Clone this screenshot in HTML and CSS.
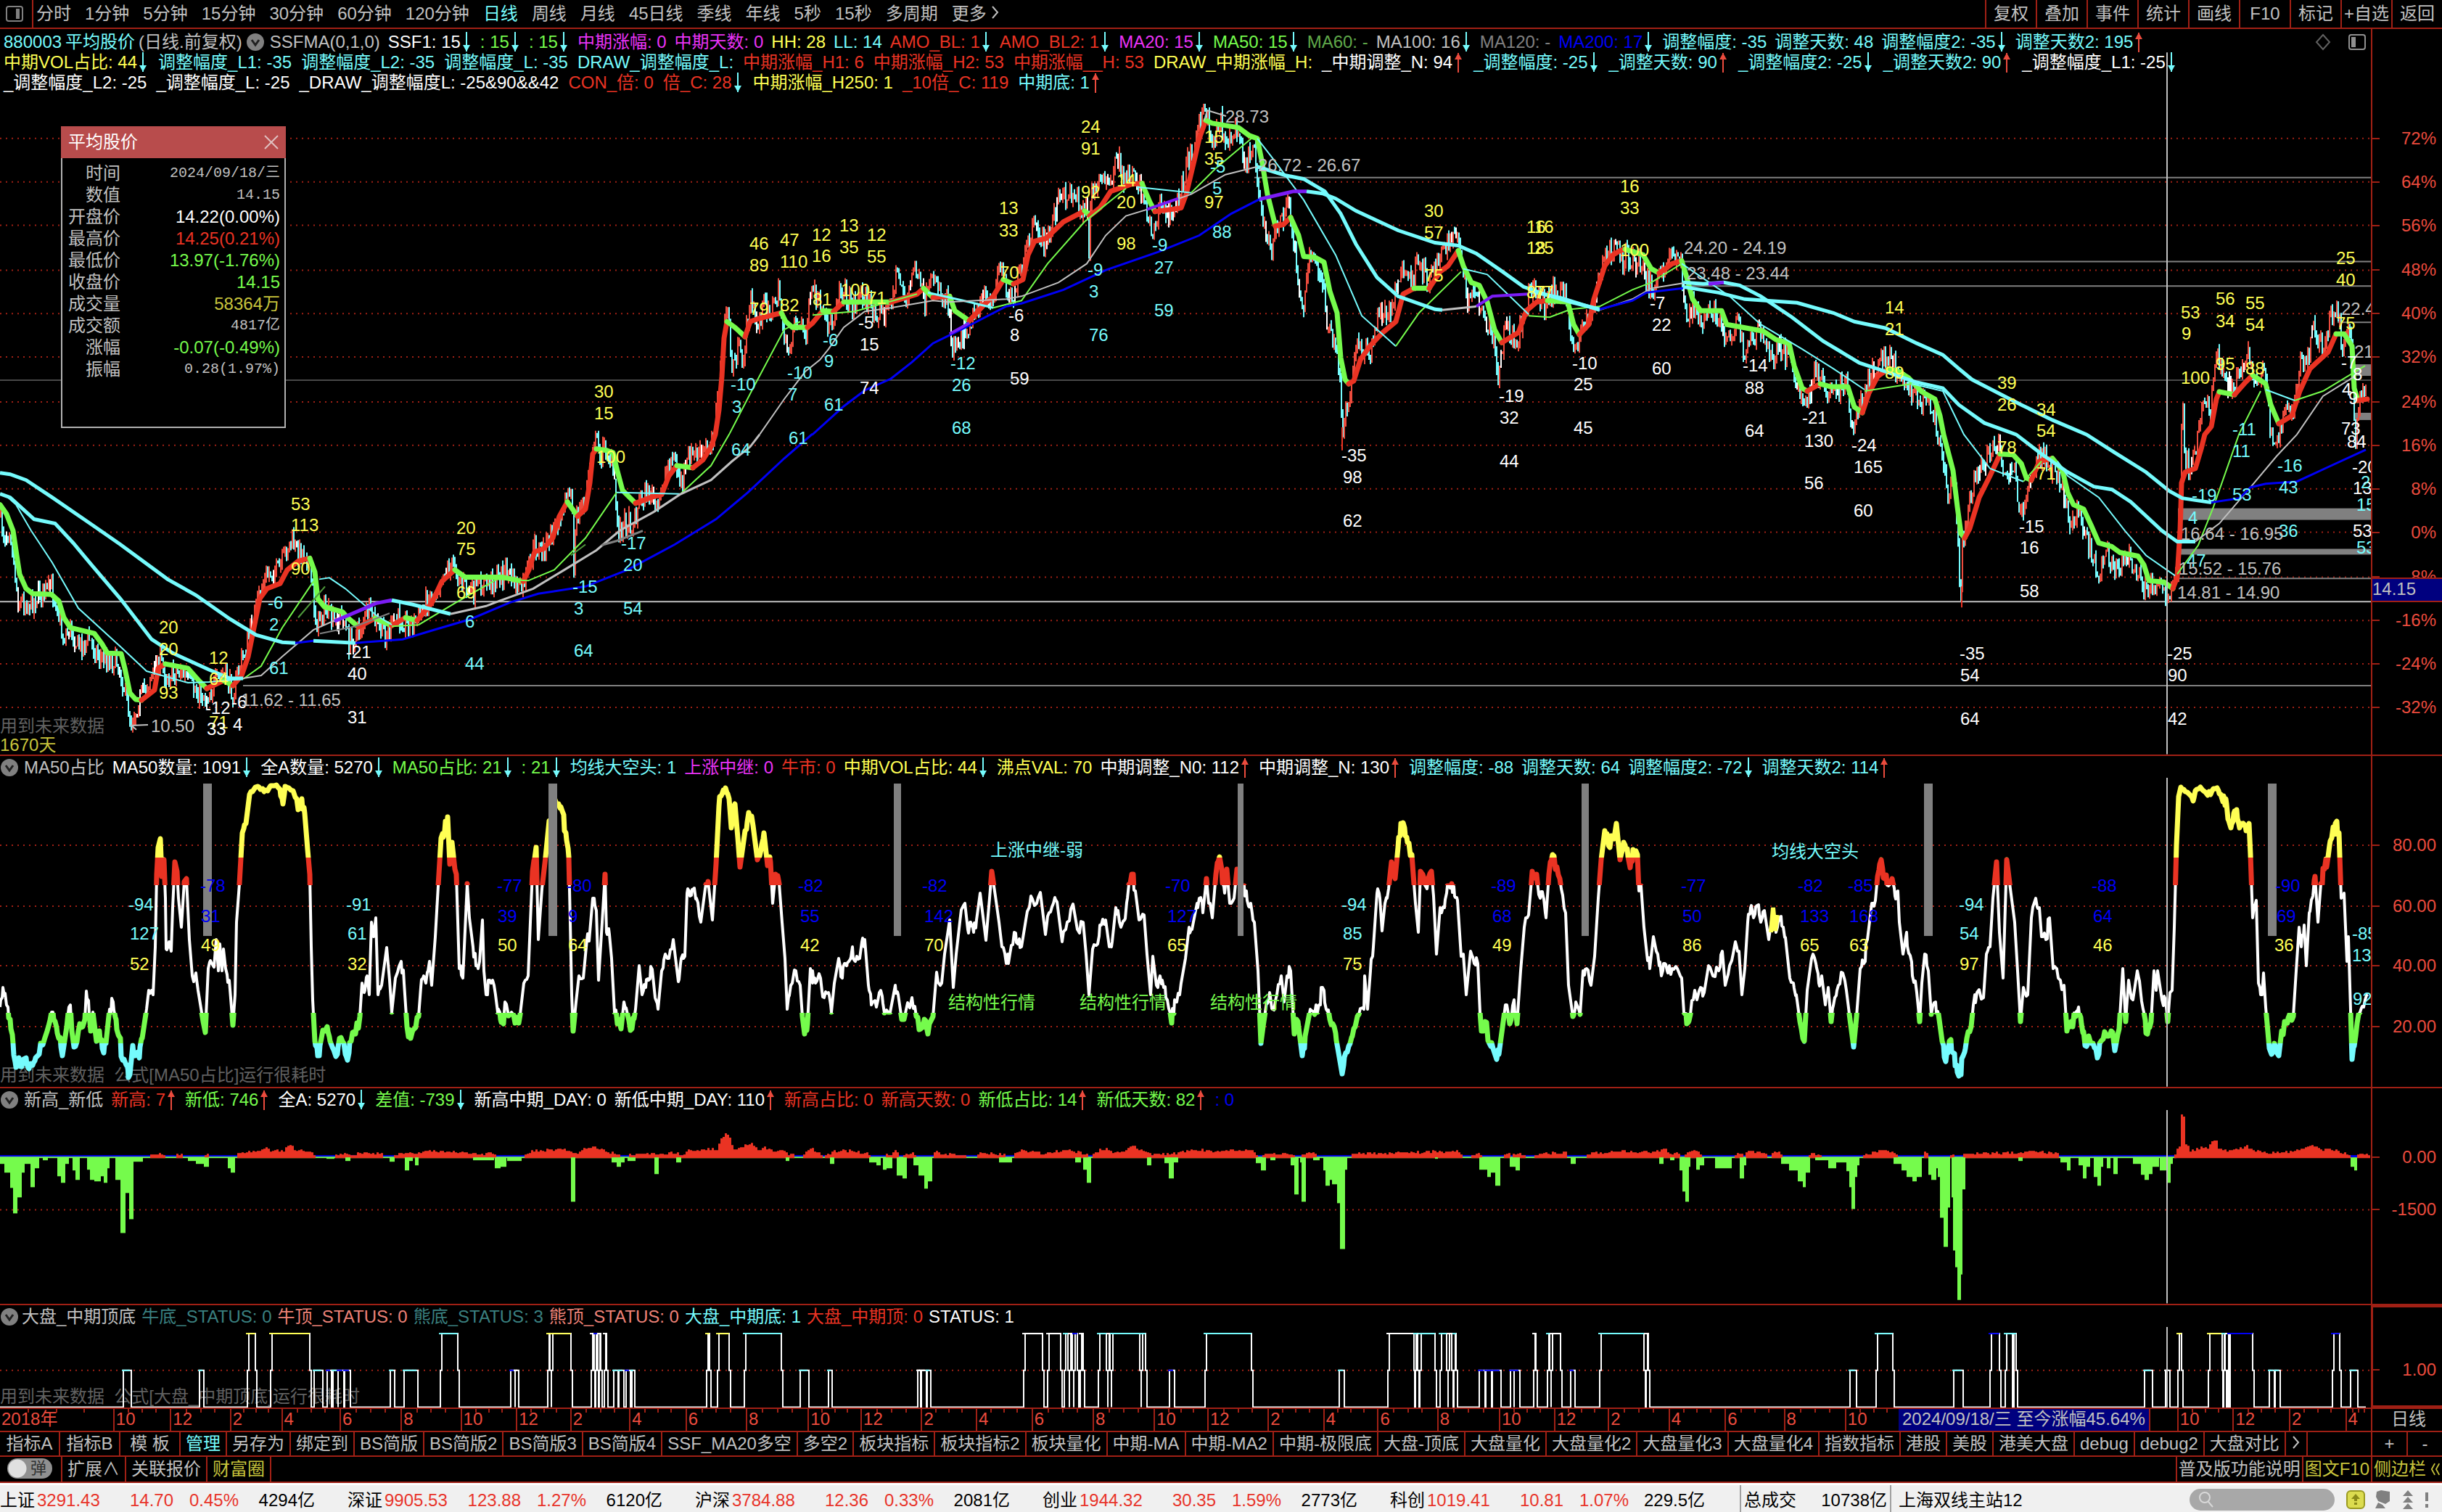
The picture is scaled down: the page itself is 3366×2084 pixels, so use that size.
FILE: index.html
```html
<!DOCTYPE html>
<html lang="zh-CN">
<head>
<meta charset="utf-8">
<title>平均股价 880003 日线</title>
<link rel="stylesheet" href="styles.css">
</head>
<body>
<div class="app">
  <header class="toolbar">
    <button class="layout-btn" aria-label="布局"><svg width="26" height="24" viewBox="0 0 26 24"><rect x="2" y="2" width="22" height="20" rx="3" fill="none" stroke="#808080" stroke-width="2"/><rect x="15" y="5" width="5" height="14" fill="#808080"/></svg></button>
    <nav class="periods">
      <button>分时</button><button>1分钟</button><button>5分钟</button><button>15分钟</button><button>30分钟</button><button>60分钟</button><button>120分钟</button><button class="on">日线</button><button>周线</button><button>月线</button><button>45日线</button><button>季线</button><button>年线</button><button>5秒</button><button>15秒</button><button>多周期</button><button>更多 <svg width="12" height="20" viewBox="0 0 12 20"><path d="M2 2l7 8-7 8" fill="none" stroke="#c0c0c0" stroke-width="2"/></svg></button>
    </nav>
    <div class="tools">
      <button>复权</button><button>叠加</button><button>事件</button><button>统计</button><button>画线</button><button>F10</button><button>标记</button><button>+自选</button><button>返回</button>
    </div>
  </header>

  <section class="pane pane-price">
    <div class="legend" id="legend-price"></div>
    <div class="chart" id="chart-price"></div>
    <div class="scale"></div>
    <div class="marks" id="marks-price"></div>
    <table class="quote">
      <caption><span>平均股价</span><button aria-label="关闭"><svg width="20" height="20" viewBox="0 0 20 20"><path d="M1 1l18 18M19 1L1 19" stroke="#e0c0c0" stroke-width="2"/></svg></button></caption>
      <tbody>
        <tr class="mono"><th>时间</th><td>2024/09/18/三</td></tr>
        <tr class="mono"><th>数值</th><td>14.15</td></tr>
        <tr class="w"><th>开盘价</th><td>14.22(0.00%)</td></tr>
        <tr class="r"><th>最高价</th><td>14.25(0.21%)</td></tr>
        <tr class="g"><th>最低价</th><td>13.97(-1.76%)</td></tr>
        <tr class="g"><th>收盘价</th><td>14.15</td></tr>
        <tr class="o"><th>成交量</th><td>58364万</td></tr>
        <tr class="mono"><th>成交额</th><td>4817亿</td></tr>
        <tr class="g"><th>涨幅</th><td>-0.07(-0.49%)</td></tr>
        <tr class="mono"><th>振幅</th><td>0.28(1.97%)</td></tr>
      </tbody>
    </table>
  </section>

  <section class="pane pane-breadth">
    <div class="legend" id="legend-breadth"></div>
    <div class="chart" id="chart-breadth"></div>
    <div class="scale"></div>
    <div class="marks" id="marks-breadth"></div>
  </section>

  <section class="pane pane-highlow">
    <div class="legend" id="legend-highlow"></div>
    <div class="chart" id="chart-highlow"></div>
    <div class="scale"></div>
    <div class="marks" id="marks-highlow"></div>
  </section>

  <section class="pane pane-status">
    <div class="legend" id="legend-status"></div>
    <div class="chart" id="chart-status"></div>
    <div class="scale boxed"></div>
    <div class="marks" id="marks-status"></div>
  </section>

  <div class="dates">
    <div class="months" id="months"></div>
    <div class="date-unit">日线</div>
  </div>

  <nav class="tabs">
    <button class="wide">指标A</button><button class="wide">指标B</button><button class="wide">模 板</button><button class="on">管理</button><button>另存为</button><button>绑定到</button><button>BS简版</button><button>BS简版2</button><button>BS简版3</button><button>BS简版4</button><button>SSF_MA20多空</button><button>多空2</button><button>板块指标</button><button>板块指标2</button><button>板块量化</button><button>中期-MA</button><button>中期-MA2</button><button>中期-极限底</button><button>大盘-顶底</button><button>大盘量化</button><button>大盘量化2</button><button>大盘量化3</button><button>大盘量化4</button><button>指数指标</button><button>港股</button><button>美股</button><button>港美大盘</button><button>debug</button><button>debug2</button><button>大盘对比</button><button aria-label="更多指标"><svg width="14" height="20" viewBox="0 0 14 20"><path d="M3 2l7 8-7 8" fill="none" stroke="#c0c0c0" stroke-width="2"/></svg></button>
    <div class="zoomers"><button>+</button><button>-</button></div>
  </nav>

  <div class="extras">
    <label class="switch"><input type="checkbox"><span>弹</span></label>
    <button>扩展∧</button><button>关联报价</button><button class="gold">财富圈</button>
    <span class="spacer"></span>
    <button class="tight">普及版功能说明</button><button class="gold tight">图文F10</button><button class="gold side">侧边栏 <svg width="16" height="22" viewBox="0 0 16 22"><path d="M7 2L2 11l5 9M14 2L9 11l5 9" fill="none" stroke="#c8c43c" stroke-width="2"/></svg></button>
  </div>

  <footer class="status">
    <div class="idx"><span>上证</span><b>3291.43</b><i>14.70</i><i>0.45%</i><em>4294亿</em></div>
    <div class="idx"><span>深证</span><b>9905.53</b><i>123.88</i><i>1.27%</i><em>6120亿</em></div>
    <div class="idx"><span>沪深</span><b>3784.88</b><i>12.36</i><i>0.33%</i><em>2081亿</em></div>
    <div class="idx"><span>创业</span><b>1944.32</b><i>30.35</i><i>1.59%</i><em>2773亿</em></div>
    <div class="idx"><span>科创</span><b>1019.41</b><i>10.81</i><i>1.07%</i><em>229.5亿</em></div>
    <div class="total"><span>总成交</span><em>10738亿</em></div>
    <div class="host">上海双线主站12</div>
    <label class="search"><svg width="22" height="24" viewBox="0 0 22 24"><circle cx="9" cy="9" r="7" fill="none" stroke="#d8d8d8" stroke-width="2"/><path d="M14 15l6 7" stroke="#d8d8d8" stroke-width="2"/></svg><input type="search" aria-label="搜索"></label>
    <svg class="tray" width="132" height="28" viewBox="0 0 132 28">
      <rect x="1" y="2" width="24" height="24" rx="5" fill="#dcdc50" stroke="#9a9a20" stroke-width="2"/><path d="M13 6l-6 7h4v3h4v-3h4zM11 18h4v3h-4z" fill="#8a8a18"/>
      <path d="M42 3l6-2 12 2v13l-6 4-10-4-3-6zM44 18l-4 8h14l-4-5" fill="#808080"/>
      <path d="M85 1l7 8H78zM85 10l7 8H78zM85 19l7 8H78z" fill="#808080"/>
      <path d="M109 4h4v12h-4zM109 20h4v5h-4z" fill="#808080"/>
    </svg>
  </footer>
</div>
<script src="chart.js"></script>
</body>
</html>
```
FILE: styles.css
```css
* { box-sizing: border-box; }
:root {
  --line: #a02015;
  --cyan: #75fbfd;
  --green: #75fb4c;
  --yellow: #ffff54;
  --red: #ea3323;
  --blue: #0000f5;
  --gray: #c0c0c0;
}
body {
  margin: 0;
  background: #000;
  color: var(--gray);
  font: 24px/28px "Liberation Sans", "Noto Sans CJK SC", sans-serif;
  white-space: nowrap;
}
button { background: none; border: 0; padding: 0; margin: 0; color: inherit; font: inherit; white-space: nowrap; }
.app { height: 100vh; display: flex; flex-direction: column; overflow: hidden; }

.toolbar { flex: 0 0 40px; display: flex; border-bottom: 2px solid var(--line); }
.layout-btn { width: 46px; border-right: 2px solid var(--line); display: flex; align-items: center; justify-content: center; padding-right: 4px; }
.periods { display: flex; gap: 19px; padding-left: 4px; }
.periods .on { color: var(--cyan); }
.tools { margin-left: auto; display: flex; }
.tools button { width: 70px; border-left: 2px solid var(--line); }

.pane {
  position: relative;
  flex: 1 1 0;
  min-height: 0;
  display: grid;
  grid-template-columns: minmax(0, 1fr) 98px;
  grid-template-rows: auto minmax(0, 1fr);
  border-bottom: 2px solid var(--line);
}
.pane-price { flex-grow: 1004; }
.pane-breadth { flex-grow: 458; }
.pane-highlow { flex-grow: 298; }
.pane-status { flex-grow: 142; }
.legend { grid-area: 1 / 1; padding: 2px 0 0 0; overflow: hidden; }
.pane-price .legend { padding: 4px 0 0 5px; }
.row { display: flex; gap: 11px; height: 28px; }
.row + .row { gap: 13px; }
.pane-status .row { gap: 8px; }
.row > span { display: flex; white-space: pre; }
.row svg { flex: none; }
.row .corner { margin-left: auto; margin-right: 6px; gap: 22px; align-items: center; }
.row .fold { margin-right: -4px; }
.row .tight { margin-right: -6px; }
.chart { grid-area: 2 / 1; position: relative; min-height: 0; clip-path: inset(-56px 0 0 0); }
.chart > svg { position: absolute; inset: 0; width: 100%; height: 100%; overflow: visible; z-index: 1; }
.chart > svg * { vector-effect: non-scaling-stroke; }
.tag { position: absolute; margin-top: -14px; z-index: 2; white-space: pre; }
.tag.d { z-index: 0; }
.scale { grid-area: 1 / 2 / 3 / 3; border-left: 2px solid var(--line); }
.scale.boxed { border: 3px solid var(--line); border-right: 0; }
.marks { grid-area: 2 / 2; position: relative; color: #eb4b3d; }
.marks span { position: absolute; right: 8px; margin-top: -14px; }
.marks span::before { content: ""; position: absolute; right: 78px; top: 13px; width: 10px; height: 2px; background: var(--line); }
.marks .now { left: 2px; right: 0; height: 34px; margin-top: -17px; line-height: 28px; background: #00007f; color: var(--gray); border-block: 2px solid var(--line); }
.marks .now::before { content: none; }

.w { color: #fff; } .c { color: var(--cyan); } .g { color: var(--green); } .y { color: var(--yellow); }
.r { color: var(--red); } .b { color: var(--blue); } .m { color: #ea33f7; } .k { color: var(--gray); }
.o { color: #c8c43c; } .d { color: #606060; } .l { color: #5fa84a; } .n { color: #808080; }
.t { color: #3a8080; } .p { color: #ee8277; }

.quote {
  position: absolute; left: 84px; top: 134px; z-index: 3; width: 310px; height: 416px;
  display: block; background: #000; border: 2px solid #b0b0b0; border-top: 0; border-spacing: 0;
}
.quote caption { display: flex; justify-content: space-between; align-items: center; height: 44px; margin: 0 -2px; padding: 0 10px; background: #b84c4c; color: #fff; }
.quote button { display: flex; }
.quote tbody { display: block; padding-top: 6px; }
.quote tr { display: flex; justify-content: space-between; height: 30px; line-height: 30px; padding-right: 6px; }
.quote th { width: 80px; padding: 0; text-align: right; font-weight: 400; color: var(--gray); }
.quote td { padding: 0; }
.quote .mono td { font-family: "Liberation Mono", "Noto Sans CJK SC", monospace; font-size: 20px; }

.dates { flex: 0 0 32px; display: flex; border-bottom: 2px solid var(--line); color: #eb4b3d; }
.months { position: relative; flex: 1; display: flex; min-width: 0; }
.months div { flex-basis: 0; min-width: 0; overflow: visible; padding-left: 2px; border-left: 2px solid var(--line); position: relative;
  background: linear-gradient(var(--line), var(--line)) 25% 0 / 2px 5px no-repeat, linear-gradient(var(--line), var(--line)) 50% 0 / 2px 5px no-repeat, linear-gradient(var(--line), var(--line)) 75% 0 / 2px 5px no-repeat; }
.months div:first-child { border-left: 0; }
.months .pick { position: absolute; top: 0; bottom: 0; background: #00007f; color: var(--gray); padding: 0 5px; border-right: 2px solid var(--line); }
.date-unit { width: 98px; padding-left: 26px; border-left: 2px solid var(--line); color: var(--gray); }

.tabs { flex: 0 0 34px; display: flex; border-bottom: 2px solid var(--line); }
.tabs > button { padding: 0 7px; border-right: 2px solid var(--line); }
.tabs .wide { width: 83px; }
.tabs .on { color: var(--cyan); }
.zoomers { margin-left: auto; width: 98px; display: flex; border-left: 2px solid var(--line); }
.zoomers button { flex: 1; }
.zoomers button + button { border-left: 2px solid var(--line); }

.extras { flex: 0 0 36px; display: flex; border-bottom: 2px solid var(--line); }
.extras > button { padding: 0 7px; border-right: 2px solid var(--line); }
.extras .tight { padding: 0 2px; border-right: 0; border-left: 2px solid var(--line); }
.extras .side { width: 98px; padding: 0 2px; border-left: 2px solid var(--line); border-right: 0; display: flex; align-items: center; gap: 6px; }
.extras .gold { color: #c8c43c; }
.spacer { flex: 1; }
.switch { width: 86px; padding: 2px 0 0 10px; border-right: 2px solid var(--line); position: relative; }
.switch input { appearance: none; display: block; margin: 0; width: 62px; height: 28px; border-radius: 14px; background: radial-gradient(circle at 14px 14px, #e0e0e0 12px, transparent 13px) #909090; }
.switch span { position: absolute; left: 42px; top: 2px; font-size: 22px; color: #303030; }

.status { flex: 0 0 40px; min-height: 0; overflow: hidden; display: flex; align-items: stretch; background: #f0f0f0; border-top: 3px solid #fff; color: #000; line-height: 42px; }
.idx { width: 479px; height: 42px; display: grid; grid-template-columns: 51px 91px 97px 90px 105px; }
.status b, .status i { font-weight: 400; font-style: normal; color: #e8342a; }
.status em { font-style: normal; text-align: right; }
.status i { text-align: right; }
.total { width: 209px; margin-left: 3px; padding: 0 4px; display: flex; justify-content: space-between; border: solid #a0a0a0; border-width: 0 2px; }
.host { padding-left: 10px; }
.search { margin: 5px 16px 2px auto; width: 200px; border-radius: 15px; background: #a8a8a8; display: flex; align-items: center; padding-left: 12px; }
.search input { width: 150px; border: 0; background: none; font: inherit; height: 26px; }
.tray { margin-top: 6px; }
```
FILE: chart.js
```js
// Every series is recorded in tiles: origin x, origin y, x step, y step.
const T = {
  A: [0, 0, .72066, .38265], B: [1120, 0, .72066, .38265], C: [2240, 0, .71811, .38265],
  D: [0, 600, .72066, .33333], E: [2240, 600, .71811, .33333], L: [1120, 500, .72066, .35714],
  F: [0, 1040, .72066, .33333], G: [1120, 1040, .72066, .33333], H: [2240, 1040, .71811, .33333],
  I: [0, 1500, .72066, .37245], J: [1120, 1500, .72066, .37245], K: [2240, 1500, .71811, .37245]
};
const X = (t, x) => Math.round(T[t][0] + x * T[t][2]);
const Y = (t, y) => Math.round(T[t][1] + y * T[t][3]);
// "D 0,290 12,330 A 5,6" -> [[x, y], ...] in chart units
function pts(s) {
  let t = 'A'; const out = [];
  for (const w of s.trim().split(/\s+/)) {
    if (T[w]) { t = w; continue; }
    const [x, y] = w.split(',').map(Number);
    out.push([X(t, x), Y(t, y)]);
  }
  return out;
}
const COLOR = { c: '#75fbfd', g: '#75fb4c', y: '#ffff54', r: '#ea3323', b: '#0000f5', v: '#7b1cf5', w: '#fff', k: '#c0c0c0', n: '#808080', m: '#ea33f7', l: '#4f9a3c', line: '#a02015' };
const line = (p, c, w, extra = '') => `<polyline points="${p.map(q => q.join()).join(' ')}" fill="none" stroke="${COLOR[c] || c}" stroke-width="${w}" ${extra}/>`;
const rect = (x0, y0, x1, y1, c) => `<rect x="${x0}" y="${y0}" width="${x1 - x0}" height="${y1 - y0}" fill="${COLOR[c] || c}"/>`;
const grid = ys => ys.map(y => line([[0, y], [3268, y]], 'line', 2, 'stroke-dasharray="2 6"')).join('');
let seed = 7;
const rnd = () => (seed = (seed * 16807) % 2147483647) / 2147483647;

function mount(id, top, bottom, svg, tags, marks) {
  const h = bottom - top, pct = y => ((y - top) / h * 100).toFixed(3);
  let html = `<svg viewBox="0 ${top} 3268 ${h}" preserveAspectRatio="none">${svg}</svg>`;
  for (const row of tags.trim().split('\n').filter(Boolean)) {
    const [t, cls, ...items] = row.trim().split('|');
    for (const it of items) {
      const [x, y, text] = it.split('@');
      html += `<span class="tag ${cls}" style="left:${(X(t, +x) / 32.68).toFixed(3)}%;top:${pct(Y(t, +y))}%">${text}</span>`;
    }
  }
  document.getElementById('chart-' + id).innerHTML = html;
  document.getElementById('marks-' + id).innerHTML = marks.map(([y, s, c]) => `<span class="${c || ''}" style="top:${pct(y)}%">${s}</span>`).join('');
}

/* ---------- legends ---------- */
const DOWN = '<svg width="16" height="28" viewBox="0 0 16 28"><path d="M8 0v27" stroke="#75fbfd" stroke-width="2"/><path d="M3 18h10l-5 9z" fill="#75fbfd"/></svg>';
const UP = '<svg width="16" height="28" viewBox="0 0 16 28"><path d="M8 1v27" stroke="#eb4b3d" stroke-width="2"/><path d="M3 10h10l-5-9z" fill="#eb4b3d"/></svg>';
const FOLD = '<svg width="26" height="28" viewBox="0 0 26 28"><circle cx="13" cy="14" r="12" fill="#808080"/><path d="M8 11l5 7 5-7" fill="none" stroke="#202020" stroke-width="3"/></svg>';
const CORNER = '<svg width="24" height="24" viewBox="0 0 24 24"><path d="M12 2l9 10-9 10-9-10z" fill="none" stroke="#606060" stroke-width="2"/></svg><svg width="26" height="24" viewBox="0 0 26 24"><rect x="2" y="2" width="22" height="20" rx="3" fill="none" stroke="#909090" stroke-width="2"/><rect x="5" y="5" width="6" height="14" fill="#909090"/></svg>';
function legend(id, rows) {
  document.getElementById('legend-' + id).innerHTML = rows.map(r => '<div class="row">' + r.split('|').map(it => {
    if (it === 'FOLD') return `<span class="fold">${FOLD}</span>`;
    if (it === 'CORNER') return `<span class="corner">${CORNER}</span>`;
    const k = it.indexOf(' ');
    return `<span class="${it.slice(0, k).split('.').join(' ')}">${it.slice(k + 1).replace('↓', DOWN).replace('↑', UP)}</span>`;
  }).join('') + '</div>').join('');
}
legend('price', [
  'c.tight 880003|c.tight 平均股价|k.tight (日线.前复权)|FOLD|k SSFMA(0,1,0)|w SSF1: 15↓|g : 15↓|g : 15↓|m 中期涨幅: 0|m 中期天数: 0|y HH: 28|c LL: 14|r AMO_BL: 1↓|r AMO_BL2: 1↓|m MA20: 15↓|g MA50: 15↓|l MA60: -|k MA100: 16↓|n MA120: -|b MA200: 17↓|c 调整幅度: -35|c 调整天数: 48|c 调整幅度2: -35↓|c 调整天数2: 195↑|CORNER',
  'y 中期VOL占比: 44↓|c 调整幅度_L1: -35|c 调整幅度_L2: -35|c 调整幅度_L: -35|c DRAW_调整幅度_L:|r 中期涨幅_H1: 6|r 中期涨幅_H2: 53|r 中期涨幅__H: 53|y DRAW_中期涨幅_H:|w _中期调整_N: 94↑|c _调整幅度: -25↓|c _调整天数: 90↑|c _调整幅度2: -25↓|c _调整天数2: 90↑|w _调整幅度_L1: -25↓',
  'w _调整幅度_L2: -25|w _调整幅度_L: -25|w _DRAW_调整幅度L: -25&amp;90&amp;&amp;42|r CON_倍: 0|r 倍_C: 28↓|y 中期涨幅_H250: 1|r _10倍_C: 119|c 中期底: 1↑'
]);
legend('breadth', ['FOLD|k MA50占比|w MA50数量: 1091↓|w 全A数量: 5270↓|g MA50占比: 21↓|g : 21↓|c 均线大空头: 1|m 上涨中继: 0|r 牛市: 0|y 中期VOL占比: 44↓|y 沸点VAL: 70|w 中期调整_N0: 112↑|w 中期调整_N: 130↑|c 调整幅度: -88|c 调整天数: 64|c 调整幅度2: -72↓|c 调整天数2: 114↑']);
legend('highlow', ['FOLD|k 新高_新低|r 新高: 7↑|g 新低: 746↑|w 全A: 5270↓|g 差值: -739↓|w 新高中期_DAY: 0|w 新低中期_DAY: 110↑|r 新高占比: 0|r 新高天数: 0|g 新低占比: 14↑|g 新低天数: 82↑|b : 0']);
legend('status', ['FOLD|k 大盘_中期顶底|t 牛底_STATUS: 0|p 牛顶_STATUS: 0|t 熊底_STATUS: 3|p 熊顶_STATUS: 0|c 大盘_中期底: 1|r 大盘_中期顶: 0|w STATUS: 1']);

/* ---------- price ---------- */
const price = pts(`D 0,340 8,420 20,380 28,560 35,690 60,700 75,660 98,640 110,700 120,850 135,800 150,880 170,850 190,920 205,930 225,940 238,1060 250,1190 265,1110 285,1020 305,930 318,1000 345,980 370,1060 395,1090 410,1040 430,990 447,1080 458,960 470,890 485,750 500,640 515,570 535,560 545,490 557,440 570,490 585,480 595,600 605,790 620,720 640,790 655,740 668,870 685,820 705,730 720,790 738,830 760,760 785,790 800,760 815,690 835,640 850,560 870,540 885,620 905,660 930,610 950,600 970,560 995,650 1008,580 1022,470 1040,480 1060,390 1075,290 1088,250 1095,300 1098,600 1102,320 1118,300 1125,160 1135,10 1150,80 1160,50 1172,150 1182,400 1195,360 1212,370 1225,260 1245,240 1257,330 1265,210 1285,90 1305,200 1320,80 1345,80 1360,20
A 1365,1560 1375,1400 1385,1200 1392,1110 1400,1330 1412,1260 1420,1320 1435,1080 1448,1180 1462,1090 1475,1120 1490,1060 1505,1290 1520,1150 1540,1200 1556,1040
B 0,1040 22,1160 38,1170 52,1030 75,1100 95,1060 115,1120 145,1130 162,980 180,1090 196,950 215,1100 235,990 250,1080 258,1060 268,1250 280,1220 300,1170 325,1070 340,1120 358,950 380,1080 400,980 420,820 445,880 470,720 500,690 515,760 525,720 528,930 532,720 540,690 558,610 568,700 583,560 598,660 612,610 630,690 648,820 655,830 665,740 688,790 705,680 722,560 740,450 755,400 765,530 778,430 795,520 815,450 828,600 843,510 855,700 865,840 880,890 895,790 912,740 925,950 938,1120 950,930 970,970 988,1200 1005,1290
L 1010,100 1014,330 1020,200 1028,130
B 1042,1230 1065,1290 1085,1120 1100,1140 1118,1030 1130,970 1145,1010 1160,960 1178,1000 1195,930 1215,880 1230,830 1240,950 1255,1090 1270,1060 1285,1180 1300,1210 1312,1390 1322,1180 1348,1230 1362,1110 1380,1030 1400,1110 1420,1050 1440,1070 1455,1270 1470,1190 1490,1130 1510,960 1530,890 1540,870 1550,960
C 0,920 25,950 42,1000 55,1060 70,1000 88,920 105,920 118,1150 130,1110 148,1180 165,1110 180,1160 198,1220 215,1150 230,1290 245,1200 262,1210 280,1290 300,1260 320,1300 345,1480 365,1340 380,1370 400,1440 425,1370 437,1568 455,1430 480,1330 500,1290 515,1310 540,1380 570,1450 585,1440 600,1560
E 608,60 618,240 632,200 639,430 643,700 647,430 665,220 680,140 700,90 715,20 728,150 745,140 760,340 775,240 795,80 810,120 835,190 855,380 870,300 890,460 908,570 925,470 942,580 960,490 980,560 1003,660 1015,600 1030,620 1043,690 1052,640 1062,550 1066,300 1069,-300 1073,100 1085,140 1095,50
C 1110,1450 1122,1500 1135,1270 1150,1370 1165,1400 1180,1360 1192,1270 1210,1360 1228,1350 1240,1568 1255,1568 1270,1470 1282,1500 1295,1310 1308,1320 1322,1190 1338,1250 1355,1150 1366,1120 1378,1260 1392,1200 1399,1500 1402,1568 1410,1440 1425,1420`);
const ssf = pts(`D 0,290 12,330 25,400 32,500 38,580 50,640 62,660 98,662 112,690 122,760 135,800 180,825 195,870 205,905 232,908 238,970 248,1070 260,1098 270,1100 295,1060 302,970 316,952 360,968 380,1020 396,1052 428,1020 446,1040 462,1000 474,920 485,800 497,680 510,640 535,618 550,560 570,525 592,512 602,570 608,680 620,715 655,735 665,760 685,797 718,762 750,792 776,758 798,772 825,700 845,610 870,562 890,590 960,592 1000,608 1012,560 1022,485 1040,475 1058,430 1070,340 1085,280 1105,340 1120,310 1128,200 1133,80 1140,60 1160,65 1172,75 1180,140 1190,230 1215,285 1245,262 1265,250 1280,170 1295,128 1325,138 1345,105 1360,50
A 1368,1568 1375,1480 1380,1360 1385,1220 1390,1160 1405,1180 1425,1215 1435,1160 1450,1150 1495,1130 1503,1160 1515,1180 1545,1180
B 0,1165 20,1120 40,1125 60,1090 150,1090 200,1060 212,1040 230,1075 262,1068 272,1120 300,1158 330,1095 345,1070 365,1010 385,1025 402,1010 412,920 425,870 447,860 480,800 520,760 530,780 550,750 570,690 610,665 630,660 645,730 655,762 685,755 705,750 715,700 730,580 740,500 752,435 765,445 815,460 835,490 850,500 860,590 870,700 885,815 900,810 915,785 930,850 940,925 960,928 978,945 990,1050 1003,1130 1010,1290 1018,1370 1025,1385 1035,1375 1048,1300 1065,1248 1090,1200 1115,1160 1130,1060 1150,1040 1180,1040 1200,980 1215,960 1235,905 1245,960 1260,1020 1275,1030 1290,1090 1305,1190 1318,1235 1350,1200 1365,1120 1385,1090 1405,1085 1445,1090 1455,1170 1467,1208 1485,1170 1495,1080 1515,960 1530,920 1545,905
C 0,900 35,920 50,970 65,985 90,950 108,942 118,1000 130,1080 145,1120 185,1120 195,1170 265,1195 290,1225 315,1240 325,1320 340,1400 350,1410 375,1385 395,1395 428,1395 440,1470 455,1490 468,1420 485,1360 505,1330 525,1340 545,1365 570,1415 595,1440 605,1500
E 612,0 620,70 630,150 638,300 645,410 652,430 662,390 680,260 700,170 720,80 745,85 760,120 770,180 780,190 795,110 820,100 840,150 850,240 860,290 880,310 895,380 910,450 935,465 950,490 985,505 995,540 1005,605 1035,612 1052,640 1060,590 1065,400 1068,200 1075,155 1095,140 1105,60
C 1112,1568 1125,1540 1135,1440 1140,1415 1170,1425 1190,1380 1205,1355 1230,1385 1240,1460 1255,1530 1280,1500 1295,1410 1315,1330 1350,1270 1365,1205 1380,1205 1395,1250 1400,1400 1406,1445 1425,1440`);

function candles(p) {
  const paths = { r: '', c: '', w: '' };
  let i = 0, prev = p[0][1];
  for (let x = 1; x < p[p.length - 1][0]; x += 2) {
    while (i < p.length - 2 && p[i + 1][0] < x) i++;
    const [x0, y0] = p[i], [x1, y1] = p[i + 1];
    const y = y0 + (y1 - y0) * (x - x0) / Math.max(1, x1 - x0) + (rnd() - .5) * 30;
    const k = rnd() < .06 ? 'w' : y < prev ? 'r' : 'c';
    const hi = Math.min(y, prev) - rnd() * 10, lo = Math.max(y, prev) + rnd() * 10;
    paths[k] += `M${x} ${hi.toFixed(0)}V${lo.toFixed(0)}`;
    prev = y;
  }
  return Object.entries(paths).map(([k, d]) => `<path d="${d}" stroke="${k === 'r' ? '#eb4b3d' : COLOR[k]}" stroke-width="2"/>`).join('');
}
function trend(p) {
  let out = '', run = [p[0]], dir = null;
  for (let i = 1; i < p.length; i++) {
    const d = p[i][1] < p[i - 1][1] ? 'r' : 'g';
    if (dir && d !== dir) { out += line(run, dir, 7, 'stroke-linejoin="round" stroke-linecap="round"'); run = [p[i - 1]]; }
    dir = d; run.push(p[i]);
  }
  return out + line(run, dir, 7, 'stroke-linejoin="round" stroke-linecap="round"');
}
// colour, width, points
const averages = [
  ['c', 2, 'D 15,262 30,290 60,400 100,530 150,720 230,880 280,980 360,1030 400,1025 465,1015'],
  ['g', 2, 'D 465,1015 500,960 540,800 600,610'], ['l', 2, 'D 570,760 622,630'],
  ['c', 2, 'D 610,600 630,595 660,640 720,750 750,790'],
  ['g', 2, 'D 750,795 800,790 870,700 950,600 1010,605 1060,560 1120,430 1180,240'], ['l', 2, 'D 1092,500 1120,455'],
  ['c', 2, 'D 1180,240 1300,245'], ['g', 2, 'D 1300,250 1360,130 1395,0 A 1440,1400 1500,1190 1530,1160'],
  ['g', 2, 'B 0,1137 80,1125 200,1060'], ['c', 3, 'B 220,1055 300,1090 345,1110'],
  ['g', 2, 'B 345,1110 400,1085 450,950 520,800 600,680'], ['c', 2, 'B 620,675 700,690 725,695'],
  ['g', 2, 'B 725,695 770,610 840,500'], ['c', 2, 'B 850,500 880,570 940,720 1000,920 1050,1140 1115,1250'],
  ['g', 2, 'B 1115,1250 1160,1130 1240,980'], ['c', 2, 'B 1245,970 1290,990 1370,1135'],
  ['g', 2, 'B 1370,1140 1410,1145 1450,1115 1505,1105 1568,1045 C 50,1020 108,950'],
  ['c', 2, 'C 108,950 200,1070 260,1170 340,1260 400,1330 460,1405'], ['g', 2, 'C 460,1410 550,1385'],
  ['c', 2, 'C 550,1385 610,1410 650,1568 E 700,140 765,195'], ['g', 2, 'E 765,195 800,110'],
  ['c', 2, 'E 830,110 850,170 910,260 960,400 1000,500 1055,585'],
  ['g', 2, 'E 1060,580 1100,460 1130,300 1178,0 C 1220,1410'], ['c', 2, 'C 1230,1405 1285,1445'], ['g', 2, 'C 1285,1445 1340,1410 1420,1320'],
  ['c', 5, 'D 0,245 20,260 65,350 105,370 140,450 175,540 230,680 290,850 330,905 400,975 440,1010 465,1012'],
  ['k', 2, 'D 465,1012 500,1000 540,920 600,810 640,770'], ['v', 5, 'D 640,775 720,700 750,688'], ['c', 5, 'D 750,688 790,705 862,745'],
  ['n', 2, 'D 612,825 680,795 745,742'],
  ['k', 3, 'D 862,745 930,710 955,690 1020,640 1080,560 1140,480 1185,400 1250,320 1300,250 1360,190 1400,110 1435,50 1453,0'],
  ['n', 3, 'D 1150,460 1180,440 1230,400'],
  ['k', 2, 'A 1453,1568 1500,1440 1540,1340 1568,1300 B 30,1260 60,1180 100,1125 150,1110 230,1085 260,1090 370,1080 400,1070 470,1020 525,950 560,850 600,780 650,750 725,700 790,630 850,600'],
  ['v', 4, 'B 640,755 700,715'], ['c', 5, 'B 850,600 905,632 940,645 980,690 1010,770 1040,880 1080,1000 1120,1070 1190,1115 1205,1118'],
  ['k', 3, 'B 1205,1118 1270,1105'], ['v', 4, 'B 1270,1105 1300,1070 1370,1060'], ['c', 5, 'B 1370,1050 1430,1075 1505,1118'],
  ['k', 2, 'B 1505,1118 1568,1080 C 50,1040 112,1022'],
  ['c', 5, 'C 112,1018 150,1025 190,1018 220,1030 260,1070 320,1145 380,1230 450,1310 500,1340 560,1380 610,1400 640,1460 690,1525 750,1568 E 800,80 850,155 900,215 935,228 970,280 1030,400 1060,445 1095,445'],
  ['v', 5, 'C 160,1025 190,1018'],
  ['k', 2, 'E 1095,445 1140,370 1200,220 1250,90 1290,0 C 1340,1430 1400,1360'],
  ['c', 5, 'D 0,160 20,165 50,190 100,260 180,380 230,455 320,600 375,665 440,765 490,830 540,862 565,865'],
  ['b', 3, 'D 565,865 600,855'], ['c', 5, 'D 600,855 680,865'],
  ['b', 3, 'D 680,865 770,850 830,810 900,765 975,695 1030,660 1120,630 1200,560 1290,455 1370,350 1430,240 1500,100 1553,0 L 0,280 60,170 100,110 150,65 190,0 B 230,1240 290,1185 370,1105 400,1095 480,1045 560,975 660,910 740,850 800,770 855,718'],
  ['v', 4, 'B 262,1205 300,1165'], ['v', 5, 'B 855,718 920,690 945,690'],
  ['c', 5, 'B 945,690 975,698 1000,715 1040,760 1120,830 1190,875 1235,885 1270,915 1320,980 1360,1035 1400,1060 1450,1090 1505,1115'],
  ['b', 3, 'B 1505,1115 1568,1085 C 40,1055 112,1040'],
  ['c', 5, 'C 112,1035 180,1055 230,1080 330,1092 400,1130 440,1160 500,1185 560,1240 610,1280 640,1330 665,1370 760,1460 820,1515 885,1568 E 940,75 1000,155 1045,235 1070,265 1125,283'],
  ['b', 3, 'E 1125,283 1180,265 1200,220 1230,205 1290,195 1350,135 1422,62']
];
const level = (x, y, c) => line([[x, y], [3268, y]], c, 2);
const PRICE_GRID = [191, 251, 311, 373, 433, 493, 555, 615, 675, 735, 797, 857, 917, 977];
mount('price', 128, 1042,
  grid(PRICE_GRID) + level(1729, 245, 'n') + level(2320, 361, 'n') + level(2320, 395, 'n') + level(3222, 445, 'n') + level(0, 525, '#484848') + level(335, 947, 'n') + level(2997, 799, 'n') + level(0, 831, 'k') +
  rect(3002, 702, 3268, 718, 'n') + rect(3000, 758, 3268, 766, 'n') + rect(3244, 503, 3268, 519, 'n') + rect(3246, 570, 3268, 580, 'n') +
  candles(price) + trend(ssf) + averages.map(([c, w, s]) => line(pts(s), c, w)).join('') +
  line([[2703, 800], [2703, 830]], 'c', 2) + line([[2704, 810], [2704, 839]], 'r', 2) + line([[1850, 590], [1850, 622]], 'r', 2) +
  line([[1660, 166], [1664, 152], [1690, 160]], 'k', 2) + line([[188, 1008], [181, 1002], [204, 1001]], 'k', 2) +
  line([[2987, 72], [2987, 1042]], 'k', 2),
  `A|y|1434@881@46|1434@958@89|1492@865@47|1492@945@110|1434@1117@79|1492@1102@82|1137@1415@30|1137@1493@15
   A|c|1398@1388@-10|1400@1468@3|1506@1345@-10|1507@1425@7
   B|y|-2@848@12|-2@925@16|0@1082@81|52@814@13|52@893@35|104@848@12|104@928@55|54@1047@100|104@1078@71|357@750@13|357@830@33|358@985@70|514@458@24|514@537@91|514@693@92|582@650@14|582@728@20|582@882@98|750@493@15|750@573@35|750@730@97|1170@761@30|1170@839@57|1170@996@75|1365@818@16|1380@818@16|1365@897@18|1380@897@25|1365@1055@87|1380@1055@77|1545@672@16|1545@750@33|1545@905@100
   B|c|20@1227@-6|22@1305@9|22@1460@61|264@1312@-12|267@1390@26|267@1545@68|526@975@-9|528@1053@3|528@1210@76|650@885@-9|653@966@27|653@1122@59|760@600@-5|765@680@5|764@835@88
   B|w|88@1165@-5|90@1243@15|90@1400@74|375@1140@-6|378@1210@8|378@1367@59|1312@1430@-19|1314@1508@32|1453@1312@-10|1456@1388@25|1456@1545@45
   L|w|1012@362@-35|1014@446@98|1014@613@62|1314@384@44
   B|k|790@420@28.73|852@595@26.72 - 26.67
   C|k|113@897@24.20 - 24.19|118@987@23.48 - 23.44|1375@1115@22.42|1400@1270@21.88
   C|y|498@1110@14|498@1190@21|498@1347@89|714@1383@39|714@1462@26|789@1478@34|789@1555@54|1364@933@25|1364@1012@40|1067@1128@53|1068@1205@9|1134@1080@56|1134@1160@34|1190@1096@55|1190@1174@54|1364@1168@75|1066@1363@100|1134@1315@95|1190@1330@88
   C|w|48@1096@-7|51@1174@22|51@1331@60|226@1320@-14|230@1400@88|230@1555@64|340@1508@-21|1375@1310@-7|1397@1350@8|1376@1405@4|1388@1437@9|1375@1548@73
   E|w|344@27@130|344@202@56|435@45@-24|438@135@165|438@315@60|756@382@-15|758@472@16|758@652@58|642@910@-35|643@1000@54|643@1180@64|1040@910@-25|1042@1000@90|1042@1180@42|1385@30@84|1395@135@-20|1397@223@13|1397@398@53
   E|y|714@55@78|789@163@71
   E|c|1165@-20@-11|1165@70@11|1252@130@-16|1254@220@43|1254@398@36|1166@248@53|1088@252@-19|1080@345@4|1078@525@47|1403@292@15|1403@472@53|1412@198@2
   E|k|1066@412@16.64 - 16.95|1062@557@15.52 - 15.76|1060@657@14.81 - 14.90
   D|y|556@287@53|556@375@113|556@558@90|304@802@20|304@892@20|304@1070@93|399@927@12|399@1015@64|399@1193@71|873@388@20|873@478@75|873@657@69|1140@93@100
   D|c|512@700@-6|515@790@2|515@970@61|1188@453@-17|1192@543@20|1192@722@54|1095@633@-15|1098@722@3|1098@898@64|889@778@6|889@950@44|1399@63@64|1508@15@61
   D|w|662@903@-21|665@993@40|665@1173@31|393@1135@-12|396@1222@33|443@1110@-6|445@1203@4
   D|k|460@1102@11.62 - 11.65|288@1210@10.50
   D|d|0@1208@用到未来数据
   D|o|0@1288@1670天`,
  PRICE_GRID.map((y, i) => [y, (72 - i * 8) + '%']).concat([[815, '14.15', 'now']]));

/* ---------- share of stocks above MA50 ---------- */
const breadthBase = pts(`F 0,1050 5,970 12,1040 20,1100 25,1200 30,1300 36,1260 42,1295 50,1260 56,1305 62,1290 68,1260 78,1200 90,1150 98,1070 105,1110 112,1180 120,1250 128,1130 135,1040 138,1150 142,1215 150,1150 158,1130 162,1100 165,985 170,1080 173,1150 178,1070 184,1190 190,1150 196,1220 202,1200 210,1060 216,1030 222,1100 228,1170 234,1270 242,1290 249,1330 254,1210 260,1240 266,1260 272,1180 280,1060 285,980 293,1000 297,800 300,500 302,390 306,355 309,510 314,440 317,600 318,810 323,780 327,820 330,640 334,450 339,490 342,600 347,720 352,530 357,520 362,770 368,920 375,910 380,1000 388,1110 393,1155 398,890 405,870 410,885 413,770 417,900 420,790 424,900 428,810 432,890 438,940 445,1125 449,1000 453,700 458,540 463,330 470,290 478,170 485,150 495,140 505,160 515,145 525,135 535,150 541,210 548,140 560,155 568,190 571,235 577,190 583,250 588,400 592,500 595,800 598,1020 602,1190 608,1250 615,1180 622,1150 626,1130 632,1190 642,1255 650,1180 658,1200 665,1270 672,1190 680,1160 688,1090 692,950 697,990 702,920 706,1000 710,700 714,760 719,680 723,1000 730,960 740,805 745,940 750,1070 756,930 767,860 773,950 778,1130 785,1180 793,1140 800,1090 805,970 810,920 815,950 822,860 826,960 832,760 838,550 844,350 850,320 856,265 860,460 865,370 870,480 873,500 878,890 885,930 893,540 898,680 905,800 910,880 917,860 923,690 926,900 930,1000 936,940 945,960 948,1000 952,1070 958,1100 963,1120 966,1030 975,1080 985,1115 995,1080 1002,950 1010,920 1015,700 1018,490 1025,390 1030,770 1036,560 1043,430 1050,280 1058,220 1068,210 1075,240 1083,330 1088,430 1090,700 1093,1000 1096,1150 1102,1030 1108,920 1116,930 1122,770 1128,740 1133,600 1140,650 1145,940 1152,700 1157,500 1160,740 1166,750 1170,850 1175,1070 1183,1100 1188,1140 1193,1030 1200,1080 1208,1140 1215,1060 1222,880 1228,1000 1235,970 1240,940 1248,895 1253,1010 1258,1060 1265,900 1272,830 1280,850 1288,770 1298,945 1303,850 1310,840 1314,580 1320,590 1327,560 1332,600 1341,700 1349,560 1354,530 1363,690 1370,460 1375,220 1380,170 1388,145 1395,190 1399,310 1406,210 1411,350 1416,470 1425,320 1432,245 1440,300 1448,440 1455,400 1461,330 1468,465 1474,450 1478,620 1484,500 1490,540 1496,700 1502,850 1506,1060 1513,960 1522,900 1530,960 1535,1090 1539,1160 1545,1120 1550,890 1554,950
G 0,900 5,950 15,930 22,1010 30,990 36,1070 42,950 50,850 57,930 63,870 70,860 77,800 82,860 90,850 95,780 100,770 107,960 113,1040 122,1050 130,980 137,1075 148,1070 158,960 164,1000 170,1100 178,1075 190,1010 198,1090 207,1140 213,1100 221,1160 230,1090 237,905 247,950 253,830 262,690 269,970 275,830 282,700 292,620 297,730 303,700 308,740 314,690 320,580 331,775 338,600 343,490 350,590 356,700 362,800 371,870 377,830 386,740 393,790 400,800 408,690 418,590 425,630 436,575 445,750 452,660 460,620 468,615 477,780 487,700 498,625 506,730 517,700 523,830 529,1000 536,810 545,790 552,710 560,690 567,800 573,780 580,640 587,700 596,690 602,600 610,500 618,570 625,690 634,670 640,830 646,1000 651,840 658,960 664,920 672,970 679,1020 687,1115 692,1020 697,1030 705,950 713,850 720,720 726,730 735,620 741,600 747,660 753,520 758,620 765,680 772,500 778,430 782,480 788,580 793,480 798,620 806,600 812,480 820,560 826,550 831,610 838,620 845,700 852,900 857,1200 862,1130 868,1030 874,990 880,1060 888,1000 896,920 902,1030 908,920 915,900 922,1160 929,1110 936,1250 942,1170 952,1060 960,1080 968,1040 975,970 983,1060 990,1100 998,1130 1005,1220 1013,1325 1020,1240 1028,1200 1035,1140 1045,1080 1054,1060 1056,920 1061,1060 1067,900 1073,800 1080,580 1085,600 1089,735 1095,620 1102,560 1108,450 1114,520 1120,390 1125,290 1132,310 1138,370 1146,420 1153,620 1158,740 1163,490 1170,520 1176,560 1183,490 1188,590 1194,830 1200,640 1208,640 1214,550 1222,540 1228,590 1233,610 1240,840 1245,830 1250,1000 1258,820 1265,870 1272,870 1276,1070 1280,1150 1287,1110 1295,1200 1302,1220 1308,1265 1315,1200 1322,1090 1325,1040 1334,1120 1342,1020 1348,1120 1354,900 1361,720 1370,670 1376,490 1385,500 1392,600 1397,590 1403,680 1409,500 1416,420 1424,470 1432,560 1440,660 1446,960 1454,1090 1460,1030 1468,1080 1474,900 1480,890 1489,960 1496,840 1503,600 1508,440 1515,320 1522,380 1530,350 1537,290 1545,440 1552,370
H 0,380 5,430 10,475 16,400 24,420 27,570 31,550 36,720 42,830 48,890 55,760 62,830 70,920 76,870 82,910 90,890 100,890 108,930 113,1070 118,1120 125,1080 133,980 138,1020 145,970 152,990 160,880 168,920 180,900 187,820 192,960 200,880 212,780 218,820 224,1000 230,890 236,700 241,640 247,680 253,630 260,700 267,650 276,770 284,650 290,740 297,680 304,720 310,820 316,930 323,950 328,1000 336,1110 344,1190 350,980 358,850 366,870 372,950 378,920 385,1040 390,970 396,1110 402,1010 410,960 418,910 425,980 432,1100 438,1215 444,1090 451,890 458,870 465,770 473,620 480,610 485,510 492,440 498,520 505,550 512,520 518,590 523,570 527,700 533,830 540,740 546,830 552,920 560,990 565,1110 570,950 575,830 582,900 588,1080 596,1030 602,1080 608,1190 615,1275 622,1190 629,1240 636,1290 642,1330 649,1250 656,1180 664,1130 668,1040 676,990 688,1010 694,830 700,800 706,600 713,450 719,740 726,930 732,440 740,560 748,700 754,900 759,1110 765,970 773,1000 780,680 788,600 795,640 800,760 808,770 815,680 822,890 832,930 842,960 848,1150 857,1110 865,1090 870,1050 876,1120 883,1210 890,1170 898,1200 906,1260 914,1190 925,1170 933,1150 940,1230 948,1140 955,890 961,1110 966,940 975,1020 983,900 990,1000 996,1070 1003,1160 1010,1110 1015,900 1020,980 1022,900 1030,1020 1037,1020 1042,1110 1046,990 1050,980 1054,720 1058,380 1062,180 1066,140 1075,160 1087,180 1095,155 1104,140 1118,175 1126,155 1136,145 1143,170 1148,200 1153,190 1158,280 1163,310 1168,250 1174,235 1180,310 1187,290 1192,320 1197,290 1201,420 1204,680 1211,610 1216,950 1222,1000 1226,910 1230,1050 1236,1220 1241,1245 1247,1200 1255,1250 1260,1150 1268,1110 1275,1080 1283,1090 1288,900 1294,720 1298,800 1303,710 1308,880 1313,660 1319,600 1325,510 1330,700 1335,540 1342,480 1350,430 1357,350 1363,290 1370,330 1374,600 1380,580 1385,860 1389,760 1396,1265 1402,1170 1410,1070 1418,1050 1426,1000`);
// daily wobble between the recorded turning points
const breadth = [];
breadthBase.forEach(([x, y], i) => {
  breadth.push([x, y]);
  const n = breadthBase[i + 1];
  if (n && n[0] - x > 3 && Math.abs(n[1] - y) < 34) {
    const s = y < 1100 ? 6 : 18;
    breadth.push([x + Math.round((n[0] - x) / 3), Math.round(y * 2 / 3 + n[1] / 3 + (rnd() - .5) * s)]);
    breadth.push([x + Math.round((n[0] - x) * 2 / 3), Math.round(y / 3 + n[1] * 2 / 3 + (rnd() - .5) * s)]);
  }
});
const bands = [['y', 1074, 1184, 7], ['r', 1184, 1222, 7], ['w', 1222, 1398, 4], ['g', 1398, 1440, 7], ['c', 1440, 1500, 7]];
mount('breadth', 1074, 1500,
  grid([1167, 1251, 1333, 1417]) +
  bands.map(([c, y0, y1, w], i) => `<clipPath id="band${i}"><rect x="0" y="${y0}" width="3268" height="${y1 - y0}"/></clipPath><g clip-path="url(#band${i})">${line(breadth, c, w, 'stroke-linejoin="round"')}</g>`).join('') +
  line(pts('H 280,740 284,640 288,735 292,670'), 'y', 6) +
  [[280, 292], [756, 768], [1232, 1242], [1706, 1714], [2180, 2190], [2652, 2664], [3126, 3138]].map(([a, b]) => rect(a, 1082, b, 1292, 'n')).join('') +
  line([[2987, 1074], [2987, 1500]], 'k', 2),
  `F|c|245@628@-94|248@748@127|662@628@-91|664@748@61
   F|y|248@873@52|385@795@49|664@873@32|952@795@50|1086@795@64|1530@795@42
   F|b|383@550@-78|385@675@31|950@550@-77|952@675@39|1084@550@-80|1086@675@9|1527@550@-82|1530@675@55
   F|d|0@1333@用到未来数据  公式[MA50占比]运行很耗时
   G|b|210@550@-82|213@675@142|675@550@-70|678@675@127|1297@550@-89|1300@675@68
   G|y|213@795@70|678@795@65|1014@873@75|1300@795@49
   G|c|1012@628@-94|1014@748@85|340@402@上涨中继-弱
   G|g|260@1032@结构性行情|510@1032@结构性行情|760@1032@结构性行情
   H|b|107@550@-77|110@675@50|332@550@-82|336@675@133|428@550@-85|430@675@168|896@550@-88|898@675@64|1248@550@-90|1250@675@69
   H|y|110@795@86|336@795@65|430@795@63|642@873@97|898@795@46|1246@795@36
   H|c|640@628@-94|642@748@54|1395@748@-85|1395@838@135|1397@1018@92|281@408@均线大空头`,
  [[1167, '80.00'], [1251, '60.00'], [1333, '40.00'], [1417, '20.00']]);

/* ---------- new highs / new lows ---------- */
const highs = pts(`I 0,262 135,262 280,262 285,250 310,250 320,258 345,250 355,262 395,250 405,262 445,258 460,243 485,238 508,222 515,235 540,237 555,218 565,235 590,240 600,252 620,258 640,252 670,250 700,245 720,248 740,258 760,250 790,245 830,238 875,240 890,248 940,247 955,260 1000,255 1015,240 1060,232 1090,235 1097,248 1110,235 1135,218 1150,235 1170,245 1190,255 1230,245 1260,250 1285,242 1300,252 1315,236 1370,232 1378,195 1388,167 1395,190 1402,230 1415,225 1425,215 1435,207 1450,230 1460,225 1480,237 1495,232 1505,250 1530,255 1545,240 1553,232
J 0,235 20,255 40,240 60,235 80,240 100,248 115,258 150,250 157,237 165,255 190,243 200,258 228,255 235,238 250,250 290,252 310,255 320,245 345,248 380,255 390,240 420,235 440,250 460,238 495,235 510,245 520,250 530,255 540,240 560,230 570,245 580,235 595,238 612,217 625,235 640,248 680,250 700,245 715,237 737,230 760,240 790,235 815,237 840,240 850,255 870,250 900,248 930,255 950,240 965,255 1020,258 1040,247 1150,243 1190,238 1210,240 1235,240 1245,255 1275,250 1280,258 1315,258 1325,242 1335,255 1350,245 1365,255 1400,248 1440,245 1445,258 1475,256 1485,247 1530,240
K 0,240 50,242 62,235 75,232 80,243 100,245 108,257 120,237 135,240 150,257 205,258 215,243 225,256 235,240 260,243 275,257 290,240 305,257 345,258 355,250 375,252 380,258 445,258 470,243 500,234 515,245 525,257 570,257 575,240 582,257 620,257 625,250 640,258 652,250 680,245 760,245 790,238 830,250 835,258 910,258 1050,258 1060,230 1064,210 1065,107 1071,107 1073,210 1085,240 1095,228 1120,222 1122,205 1134,205 1138,225 1155,236 1175,232 1192,220 1205,235 1235,248 1285,240 1320,218 1335,235 1350,228 1375,243 1390,252 1400,255 1420,243 1428,250`);
// area drawn as three-unit wide bars with a little daily variation
function bars(p) {
  let d = 'M0 1598', i = 0;
  for (let x = 0; x < 3266; x += 3) {
    while (i < p.length - 2 && p[i + 1][0] <= x) i++;
    const [x0, y0] = p[i], [x1, y1] = p[i + 1];
    let y = y0 + (y1 - y0) * (x - x0) / Math.max(1, x1 - x0);
    y = 1598 - y < 4 ? 1598 : Math.min(1594, y + (rnd() - .6) * 4);
    d += `V${y.toFixed(0)}H${x + 3}`;
  }
  return `<path d="${d}V1598z" fill="${COLOR.r}"/>`;
}
// tile, then start,end,depth of every bar
const lows = [
  ['I', '0,10,285 8,20,316 20,28,372 25,33,466 33,41,408 41,47,316 47,58,285 58,66,370 66,75,300 82,92,272 110,117,330 117,125,354 125,132,285 139,144,310 144,153,343 166,172,305 172,180,343 180,193,348 193,198,330 198,206,354 206,210,300 221,230,343 230,240,541 240,247,392 247,255,488 255,273,277 360,375,275 375,390,285 390,399,294 436,441,300 441,449,316 625,640,267 660,670,273 745,755,277 774,783,310 783,790,275 794,801,289 905,945,270 946,957,300 957,969,294 970,998,273 1092,1101,423 1170,1180,280 1180,1188,294 1188,1195,280 1200,1215,273 1252,1260,321 1293,1303,278 1503,1510,273'],
  ['J', '33,42,285 108,122,278 122,130,289 135,142,305 142,152,300 161,172,327 172,180,337 193,203,290 203,213,327 213,221,376 221,229,348 357,381,278 502,514,278 518,525,305 525,533,354 640,648,289 673,681,283 681,691,337 691,700,280 848,857,283 857,867,310 875,885,272 915,921,290 921,930,397 932,935,280 935,943,423 958,970,272 977,981,310 981,989,364 989,994,345 994,1003,359 1003,1009,430 1009,1019,600 1019,1022,305 1190,1196,267 1275,1290,305 1290,1298,332 1298,1306,318 1306,1316,364 1334,1345,294 1345,1353,310 1450,1460,285'],
  ['K', '66,74,284 87,95,272 105,110,310 110,115,386 115,123,423 123,126,294 137,144,305 144,152,290 173,182,300 182,205,300 220,228,337 228,232,290 300,315,284 315,332,310 332,341,348 341,347,370 347,355,316 365,390,272 390,405,300 405,425,278 425,430,311 430,435,370 435,442,450 442,446,332 446,450,290 515,530,284 530,540,310 540,552,332 552,560,348 560,570,332 582,588,326 588,597,343 597,600,300 600,605,332 605,611,482 611,620,590 620,624,445 626,632,408 630,636,605 633,640,665 638,645,788 643,648,692 648,653,378 755,763,273 835,848,278 848,855,310 870,878,290 878,886,337 886,892,294 900,906,332 906,914,364 914,917,294 925,932,300 937,946,321 975,990,284 990,997,326 997,1005,343 1005,1013,321 1013,1025,294 1026,1039,310 1041,1047,354 1047,1052,284 1393,1399,294 1399,1405,310']
];
mount('highlow', 1532, 1798,
  grid([1669]) + rect(0, 1594, 3265, 1597, 'b') + rect(0, 1596, 3000, 1598, 'g') + bars(highs) +
  lows.map(([t, s]) => s.split(' ').map(b => { const [a, z, d] = b.split(',').map(Number); return rect(X(t, a), 1597, X(t, z), Y(t, d), 'g'); }).join('')).join('') +
  line([[2987, 1532], [2987, 1798]], 'k', 2),
  '', [[1597, '0.00'], [1669, '-1500']]);

/* ---------- market status steps ---------- */
// tile, then start,end,level,cap colour of every pulse
const pulses = [
  ['I', '238,248,1,c 384,387,1,c 476,488,2,y 520,593,2,y 603,615,1,c 628,632,1,b 640,644,1,c 650,655,1,b 662,667,1,b 750,752,1,c 775,797,1,c 845,876,2,c 979,982,1,b 988,990,1,w 1050,1052,2,y 1058,1092,2,y 1133,1136,2,w 1141,1143,2,b 1147,1149,2,w 1158,1160,2,w 1177,1180,1,c 1186,1190,1,c 1200,1203,1,b 1211,1212,1,c 1354,1357,2,y 1375,1395,2,y 1427,1495,2,c 1534,1545,1,c'],
  ['J', '33,35,1,c 204,206,1,w 210,215,1,w 222,224,1,c 406,440,2,w 453,474,2,w 484,488,2,c 494,497,2,w 502,507,2,b 515,518,2,w 550,562,2,c 567,569,2,w 575,626,2,c 631,637,2,c 685,689,1,b 753,840,2,c 1010,1014,1,c 1103,1150,2,w 1155,1157,2,c 1164,1190,2,c 1203,1213,2,c 1219,1223,2,w 1229,1231,2,c 1278,1284,1,b 1290,1297,1,b 1301,1314,1,b 1337,1339,1,b 1345,1350,1,b 1382,1384,2,w 1408,1410,2,c 1415,1431,2,w 1453,1455,1,b 1508,1590,2,c'],
  ['K', '43,45,2,w 435,442,1,c 485,514,2,c 633,646,1,c 703,718,2,b 733,744,2,c 747,750,2,c 1000,1010,1,c 1040,1043,1,w 1064,1068,2,y 1123,1146,2,y 1150,1152,2,c 1158,1159,2,w 1162,1205,2,b 1240,1244,1,c 1251,1254,1,c 1360,1371,2,b 1396,1403,1,c']
];
const STEP = [1939, 1889, 1839];
let steps = [[0, STEP[0]]], caps = '';
for (const [t, s] of pulses) for (const b of s.split(' ')) {
  const [a, z, lv, c] = b.split(','), x0 = X(t, +a), x1 = X(t, +z), y = STEP[lv];
  steps.push([x0 - 2, STEP[0]], [x0 - 2, STEP[1]], [x0, STEP[1]], [x0, y], [x1, y], [x1, STEP[1]], [x1 + 2, STEP[1]], [x1 + 2, STEP[0]]);
  caps += line([[x0 - 4, y], [x1, y]], c, 2);
}
steps.push([3261, STEP[0]]);
mount('status', 1830, 1940, grid([1889]) + line(steps, 'w', 2) + caps + line([[2987, 1830], [2987, 1940]], 'k', 2),
  'I|d|0@1140@用到未来数据  公式[大盘_中期顶底]运行很耗时', [[1889, '1.00']]);

/* ---------- month ruler ---------- */
const starts = [[0, '2018年'], [161, 10], [239, 12], [321, 2], [391, 4], [471, 6], [555, 8], [637, 10], [713, 12], [787, 2], [868, 4], [945, 6], [1028, 8], [1113, 10], [1185, 12], [1268, 2], [1343, 4], [1419, 6], [1503, 8], [1587, 10], [1660, 12], [1743, 2], [1819, 4], [1893, 6], [1975, 8], [2060, 10], [2135, 12], [2209, 2], [2292, 4], [2369, 6], [2450, 8], [2534, 10], [2611, ''], [3005, 10], [3081, 12], [3158, 2], [3235, 4], [3268]];
document.getElementById('months').innerHTML = starts.slice(0, -1).map(([x, s], i) => `<div style="flex-grow:${starts[i + 1][0] - x}">${s}</div>`).join('') +
  `<span class="pick" style="left:${(2617 / 32.68).toFixed(3)}%">2024/09/18/三 至今涨幅45.64%</span>`;
```
